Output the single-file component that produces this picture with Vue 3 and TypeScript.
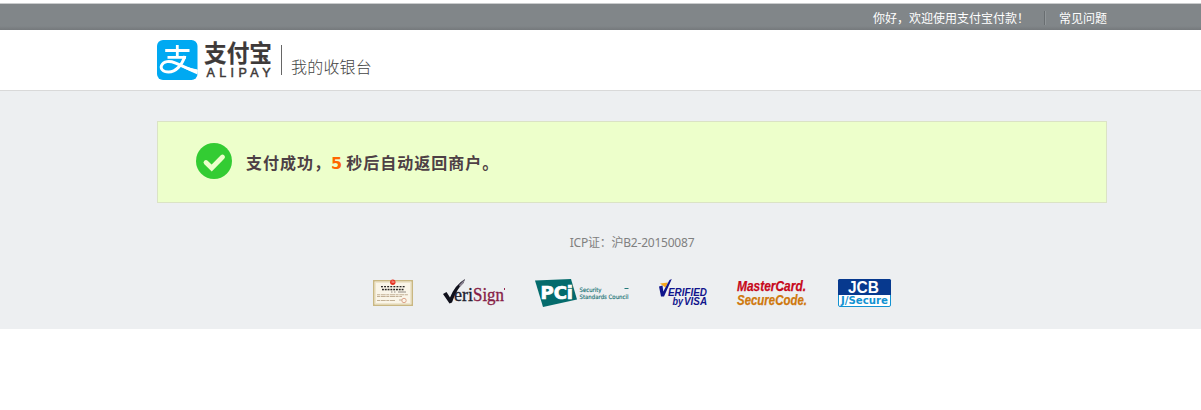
<script setup lang="ts">
import { ref } from 'vue'

const seconds = ref<number>(5)
const dots: number[] = [0, 1, 2, 3, 4, 5, 6, 7]
</script>

<template>
  <div class="page">
    <div class="topbar">
      <div class="wrap topbar-inner">
        <span class="welcome">你好，欢迎使用支付宝付款！</span>
        <span class="split"></span>
        <a class="faq">常见问题</a>
      </div>
    </div>

    <header class="header">
      <div class="wrap header-inner">
        <svg class="mark" width="41" height="40" viewBox="0 0 41 40">
          <rect width="40.5" height="40" rx="6" fill="#00a9f2" />
          <g fill="none" stroke="#fff">
            <path d="M8.2 10.500H32.5M20.300 5V17M10.5 17.300H29" stroke-width="2.800" />
            <path d="M28 16C25 25 19 32 11.5 32C5.5 32 3.3 28.5 4.5 25.5C6.5 21 12.500 20.500 18 22.800C26 26 31 29.500 40.500 31.500" stroke-width="2.900" />
          </g>
          <path d="M25 25.300Q32 28 40.500 29.500V34.500Q33 31.500 24 26.500Z" fill="#fff" />
        </svg>
        <svg class="wordmark" width="68" height="40" viewBox="0 0 68 40">
          <text class="word-cn" x="0" y="22" textLength="68" lengthAdjust="spacingAndGlyphs">支付宝</text>
          <text class="word-en" x="2.500" y="37.200" textLength="64">ALIPAY</text>
        </svg>
        <span class="bar"></span>
        <span class="title">我的收银台</span>
      </div>
    </header>

    <main class="body">
      <section class="wrap notice">
        <svg class="tick" width="36" height="36" viewBox="0 0 36 36">
          <circle cx="18" cy="18" r="18" fill="#33cc33" />
          <path d="M10 19.500L15.700 25L26.500 14" fill="none" stroke="#edffcb" stroke-width="4.800" stroke-linecap="round" stroke-linejoin="miter" />
        </svg>
        <p class="message">支付成功，<b>{{ seconds }}</b><span>秒后自动返回商户。</span></p>
      </section>

      <footer class="wrap footer">
        <p class="icp">ICP证：沪B2-20150087</p>
        <div class="seals">
          <svg width="40" height="28" viewBox="0 0 40 28">
            <rect x=".75" y="1.750" width="38.500" height="24.500" fill="#faf5e8" stroke="#c9b782" stroke-width="1.500" />
            <rect x="2.500" y="3.500" width="35" height="21" fill="none" stroke="#eee5cc" />
            <circle cx="19.800" cy="3.200" r="2.700" fill="#e63322" />
            <path d="M19.200 1.500V4M20.800 2V4" stroke="#fff" stroke-width=".5" />
            <g fill="#292624">
              <rect v-for="n in dots" :key="n" :x="8 + n * 3.1" y="7" width="1.900" height="1.300" />
              <rect v-for="n in dots" :key="'b' + n" :x="9 + n * 2.8" y="9.800" width="1.900" height="1.500" />
              <path d="M18 13h1.500M21 13h1.500M25 13h8" stroke="#77706a" stroke-width=".8" />
            </g>
            <path d="M4 15.700H35M4 17.500H29M4 21.500H22M26 21H30" stroke="#c2b095" stroke-width="1.100" stroke-dasharray="3 .7 5 .6" />
            <circle cx="31" cy="21.500" r="2.200" fill="none" stroke="#dda58c" />
          </svg>

          <svg width="62" height="28" viewBox="0 0 62 28">
            <path d="M0 15L3.500 13L7 18.500Q12 6 22 0L20.500 4Q14 9 9 23.500L6.500 24.500Z" fill="#10111c" />
            <path d="M16 6L22 0L20.500 4L17 8Z" fill="#8d8493" />
            <text class="veri" x="11" y="22" textLength="19" lengthAdjust="spacingAndGlyphs">eri</text>
            <text class="sign" x="30" y="22" textLength="31" lengthAdjust="spacingAndGlyphs">Sign</text>
            <path d="M61.500 9v2" stroke="#93274e" stroke-width="1" />
          </svg>

          <svg width="94" height="28" viewBox="0 0 94 28">
            <path d="M0 1.500L36 0L42 20.500L8 28Z" fill="#046b6c" />
            <text class="pci" x="5.500" y="19.500" textLength="32.500" lengthAdjust="spacingAndGlyphs">PCi</text>
            <text class="council" x="44.500" y="13" textLength="22" lengthAdjust="spacingAndGlyphs">Security</text>
            <text class="council" x="44.500" y="20" textLength="49" lengthAdjust="spacingAndGlyphs">Standards Council</text>
            <path d="M89.500 9.500h4" stroke="#23797a" stroke-width="1" />
          </svg>

          <svg width="48" height="28" viewBox="0 0 48 28">
            <path d="M1 4.500L9 3.500L6.500 8.500Z" fill="#f7a51c" />
            <path d="M0 7.500L3.500 6.500L4.300 12.500L10.500 1L12.800 0L5 17.500H2Z" fill="#10148c" />
            <text class="visa" x="9" y="16.500" textLength="39" lengthAdjust="spacingAndGlyphs">ERIFIED</text>
            <text class="visa" x="13.500" y="26" textLength="10.500" lengthAdjust="spacingAndGlyphs">by</text>
            <text class="visa" x="25" y="26" textLength="23" lengthAdjust="spacingAndGlyphs">VISA</text>
          </svg>

          <svg width="71" height="28" viewBox="0 0 71 28">
            <text class="mc red" x="0" y="12.200" textLength="69" lengthAdjust="spacingAndGlyphs">MasterCard.</text>
            <text class="mc gold" x="0" y="26" textLength="70" lengthAdjust="spacingAndGlyphs">SecureCode.</text>
          </svg>

          <svg width="53" height="28" viewBox="0 0 53 28">
            <rect x=".5" y=".5" width="52" height="27" rx="1.500" fill="#fff" stroke="#1292d2" />
            <path d="M0 16V1.500Q0 0 1.500 0H51.500Q53 0 53 1.500V16Z" fill="#07398e" />
            <text class="jcb" x="10" y="14" textLength="31" lengthAdjust="spacingAndGlyphs">JCB</text>
            <text class="jsecure" x="3" y="25" textLength="47" lengthAdjust="spacingAndGlyphs">J/Secure</text>
          </svg>
        </div>
      </footer>
    </main>
  </div>
</template>

<style>
body {
  background: #fff;
  overflow: hidden;
}
</style>

<style scoped>
.page {
  font-family: "Liberation Sans", "Noto Sans CJK SC", sans-serif;
  font-size: 12px;
  padding-top: 3px;
}
.wrap {
  width: 950px;
  margin-left: 157px;
  box-sizing: border-box;
}
.topbar {
  height: 27px;
  box-sizing: border-box;
  border-top: 1px solid #cacccd;
  background: linear-gradient(#818689 0 22px, #75797c 26px);
}
.topbar-inner {
  display: flex;
  justify-content: flex-end;
  align-items: center;
  height: 26px;
  color: #fff;
  font-family: "Noto Sans CJK SC", sans-serif;
  line-height: 26px;
  padding-top: 2px;
}
.welcome {
  width: 156px;
  white-space: nowrap;
}
.split {
  width: 1px;
  height: 14px;
  margin: 0 13px 0 15px;
  background: #696e71;
  border-right: 1px solid #919699;
}
.faq {
  width: 48px;
  white-space: nowrap;
}
.header {
  height: 61px;
  box-sizing: border-box;
  background: #fff;
  border-bottom: 1px solid #d9d9d9;
}
.header-inner {
  display: flex;
  padding-top: 10px;
}
.wordmark {
  margin-left: 6px;
  overflow: visible;
}
.word-cn {
  font: 700 23.500px "Noto Sans CJK SC", sans-serif;
  fill: #3e3a39;
  stroke: #3e3a39;
  stroke-width: 0.2px;
}
.word-en {
  font: 12.500px "Liberation Sans", sans-serif;
  fill: #3e3a39;
  stroke: #3e3a39;
  stroke-width: 0.5px;
}
.bar {
  width: 1px;
  height: 30px;
  margin: 5px 9px 0 9px;
  background: #666;
}
.title {
  margin-top: 14px;
  font: 300 16px/24px "Noto Sans CJK SC", sans-serif;
  letter-spacing: 0.2px;
  color: #444;
}
.body {
  height: 238px;
  box-sizing: border-box;
  padding-top: 30px;
  background: #edeff1;
}
.notice {
  display: flex;
  height: 82px;
  border: 1px solid #dbe3c5;
  background: #edffcb;
  padding: 21px 38px;
}
.message {
  margin: 7px 0 0 14px;
  font: bold 16px/24px "Noto Sans CJK SC", sans-serif;
  letter-spacing: 1px;
  color: #4d4045;
  white-space: nowrap;
}
.message b {
  margin-right: 4px;
  font: bold 16px "DejaVu Sans", sans-serif;
  letter-spacing: 0;
  color: #ff6600;
}
.icp {
  margin: 0;
  padding-top: 31px;
  height: 45px;
  line-height: 18px;
  text-align: center;
  color: #808080;
  font-family: "Noto Sans", "Noto Sans CJK SC", sans-serif;
  letter-spacing: -0.22px;
}
.seals {
  display: flex;
  justify-content: center;
  gap: 30px;
}
.seals svg {
  overflow: visible;
}
.veri, .sign {
  font: 19px "Liberation Serif", serif;
  fill: #202130;
  stroke: #202130;
  stroke-width: 0.35px;
}
.sign {
  fill: #861c46;
  stroke: #861c46;
}
.pci {
  font: bold 17px "DejaVu Sans", sans-serif;
  fill: #fff;
  stroke: #fff;
  stroke-width: 0.7px;
}
.council {
  font: 6px "DejaVu Sans", sans-serif;
  fill: #187273;
  stroke: #187273;
  stroke-width: 0.15px;
}
.visa {
  font: italic bold 11.500px "Liberation Sans", sans-serif;
  fill: #10148c;
}
.mc {
  font: italic bold 15px "Liberation Sans", sans-serif;
  stroke-width: 0.25px;
}
.red {
  fill: #c7081b;
  stroke: #c7081b;
}
.gold {
  fill: #cf780d;
  stroke: #cf780d;
}
.jcb {
  font: bold 17px "Liberation Sans", sans-serif;
  fill: #fff;
}
.jsecure {
  font: bold 10px "DejaVu Sans", sans-serif;
  fill: #1292d2;
}
</style>
